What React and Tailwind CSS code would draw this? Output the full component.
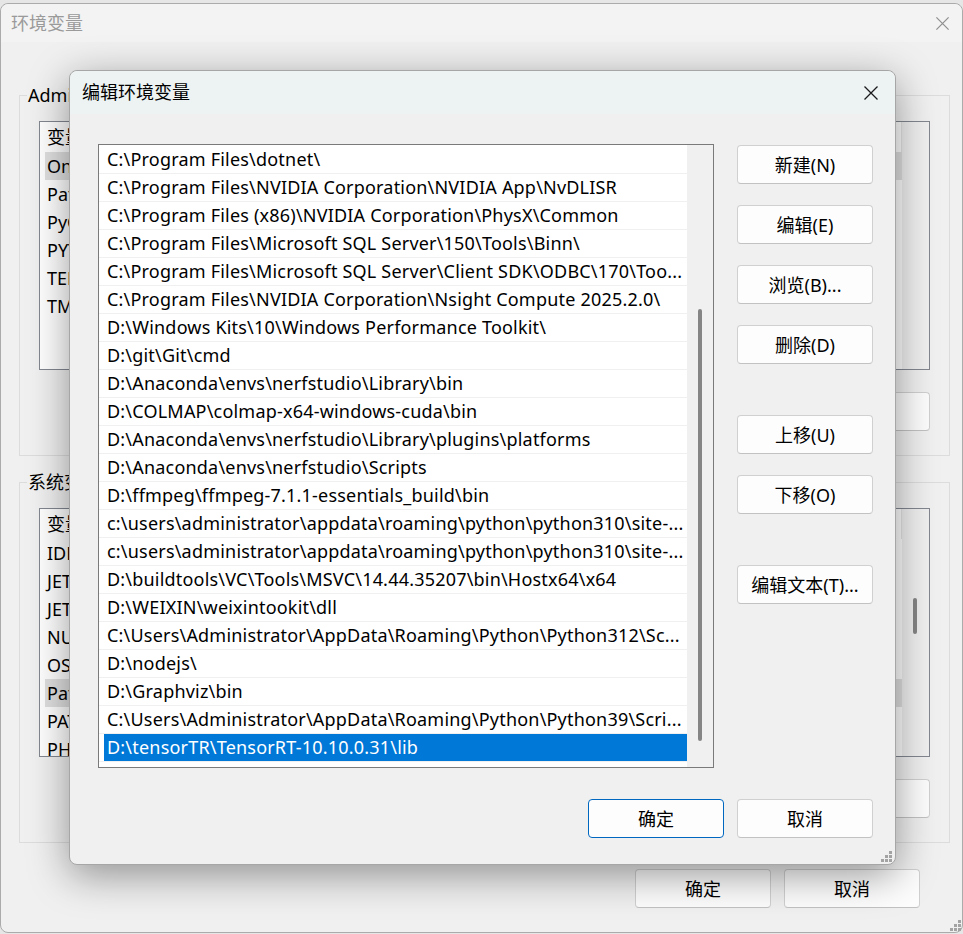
const paths = [
  'C:\\Program Files\\dotnet\\',
  'C:\\Program Files\\NVIDIA Corporation\\NVIDIA App\\NvDLISR',
  'C:\\Program Files (x86)\\NVIDIA Corporation\\PhysX\\Common',
  'C:\\Program Files\\Microsoft SQL Server\\150\\Tools\\Binn\\',
  'C:\\Program Files\\Microsoft SQL Server\\Client SDK\\ODBC\\170\\Too...',
  'C:\\Program Files\\NVIDIA Corporation\\Nsight Compute 2025.2.0\\',
  'D:\\Windows Kits\\10\\Windows Performance Toolkit\\',
  'D:\\git\\Git\\cmd',
  'D:\\Anaconda\\envs\\nerfstudio\\Library\\bin',
  'D:\\COLMAP\\colmap-x64-windows-cuda\\bin',
  'D:\\Anaconda\\envs\\nerfstudio\\Library\\plugins\\platforms',
  'D:\\Anaconda\\envs\\nerfstudio\\Scripts',
  'D:\\ffmpeg\\ffmpeg-7.1.1-essentials_build\\bin',
  'c:\\users\\administrator\\appdata\\roaming\\python\\python310\\site-...',
  'c:\\users\\administrator\\appdata\\roaming\\python\\python310\\site-...',
  'D:\\buildtools\\VC\\Tools\\MSVC\\14.44.35207\\bin\\Hostx64\\x64',
  'D:\\WEIXIN\\weixintookit\\dll',
  'C:\\Users\\Administrator\\AppData\\Roaming\\Python\\Python312\\Sc...',
  'D:\\nodejs\\',
  'D:\\Graphviz\\bin',
  'C:\\Users\\Administrator\\AppData\\Roaming\\Python\\Python39\\Scri...',
  'D:\\tensorTR\\TensorRT-10.10.0.31\\lib',
];

// only the first letters of these peek out from behind the dialog
const userVars = ['OneDrive', 'Path', 'PyCharm', 'PYTHONPATH', 'TEMP', 'TMP'];
const sysVars = ['IDEA', 'JETBRAINS', 'JETBRAINS', 'NUMBER', 'OS', 'Path', 'PATHEXT', 'PHP', 'PROCESSOR'];

function CloseIcon({ className }) {
  return (
    <svg width="16" height="16" viewBox="0 0 16 16" className={className}>
      <path d="M1.5 1.5 L14.5 14.5 M14.5 1.5 L1.5 14.5" stroke="currentColor" strokeWidth="1.3" fill="none" />
    </svg>
  );
}

function Grip() {
  return (
    <svg width="11" height="11" viewBox="0 0 11 11">
      <g fill="#a3a3a3">
        <rect x="8" y="0" width="3" height="3" />
        <rect x="4" y="4" width="3" height="3" />
        <rect x="8" y="4" width="3" height="3" />
        <rect x="0" y="8" width="3" height="3" />
        <rect x="4" y="8" width="3" height="3" />
        <rect x="8" y="8" width="3" height="3" />
      </g>
    </svg>
  );
}

function Btn({ children, primary, className = '' }) {
  return (
    <button
      className={`w-[136px] h-[39px] shrink-0 rounded-[4px] border bg-[#fdfdfd] text-[18px] leading-none text-black flex items-center justify-center ${
        primary ? 'border-[#0067c0]' : 'border-[#d0d0d0] border-b-[#c2c2c2]'
      } ${className}`}
    >
      {children}
    </button>
  );
}

function VarList({ rows, selected, scroll }) {
  return (
    <div className="h-[249px] border border-[#828790] bg-white overflow-hidden flex">
      <div className="ml-[5px] w-[857px] shrink-0">
        <div className="h-[30px] flex items-center">
          <div className="flex-1 pl-[2px]">变量</div>
          <div className="w-px h-full bg-[#e5e5e5]" />
        </div>
        {rows.map((name, i) => (
          <div
            key={i}
            className={`h-[28px] flex items-center whitespace-nowrap pl-[2px] ${i === selected ? 'bg-[#e0e0e0]' : ''}`}
          >
            {name}
          </div>
        ))}
      </div>
      <div className="flex-1 bg-[#f0f0f0] pt-[89px]">
        {scroll && <div className="ml-[11px] w-[4px] h-[36px] rounded-full bg-[#858585]" />}
      </div>
    </div>
  );
}

function Group({ label, children, className = '' }) {
  return (
    <fieldset className={`ml-[18px] w-[931px] border border-[#dcdcdc] p-0 ${className}`}>
      <legend className="ml-[7px] px-[1px] leading-[24px] text-[18px] text-black">{label}</legend>
      <div className="px-[19px] pt-[14px] pb-[24px]">{children}</div>
    </fieldset>
  );
}

export default function App() {
  return (
    <div className="relative w-[963px] h-[934px] overflow-hidden bg-[#e6e6e6] pt-[3px] text-[18px] text-black font-['Noto_Sans','Noto_Sans_CJK_SC',sans-serif]">
      {/* background window */}
      <div className="w-[963px] h-[930px] rounded-[8px] border border-[#ababab] bg-[#f0f0f0] flex flex-col">
        <div className="h-[38px] flex items-center justify-between pl-[10px] pr-[12px] bg-[#f3f3f3] rounded-t-[8px]">
          <span className="text-[#9a9a9a]">环境变量</span>
          <CloseIcon className="text-[#8f8f8f] w-[15px] h-[15px]" />
        </div>

        <Group label="Administrator 的用户变量(U)" className="mt-[41px]">
          <VarList rows={userVars} selected={0} />
          <div className="mt-[22px] flex justify-end gap-[13px]">
            <Btn>新建(N)...</Btn>
            <Btn>编辑(E)...</Btn>
            <Btn>删除(D)</Btn>
          </div>
        </Group>

        <Group label="系统变量(S)" className="mt-[14px]">
          <VarList rows={sysVars} selected={5} scroll />
          <div className="mt-[22px] flex justify-end gap-[13px]">
            <Btn>新建(W)...</Btn>
            <Btn>编辑(I)...</Btn>
            <Btn>删除(L)</Btn>
          </div>
        </Group>

        <div className="mt-[26px] flex justify-end gap-[13px] pr-[42px]">
          <Btn className="w-[135px]">确定</Btn>
          <Btn className="w-[135px]">取消</Btn>
        </div>
        <div className="flex-1 flex items-end justify-end pr-[1px] pb-[1px]">
          <Grip />
        </div>
      </div>

      {/* edit dialog */}
      <div className="absolute left-[69px] top-[70px] w-[827px] h-[795px] rounded-[8px] border border-[#a6a6a6] bg-[#f0f0f0] flex flex-col shadow-[0_10px_40px_rgba(0,0,0,0.4)]">
        <div className="h-[43px] shrink-0 flex items-center justify-between pl-[12px] pr-[16px] bg-[#edf3f3] rounded-t-[8px]">
          <span>编辑环境变量</span>
          <CloseIcon className="text-[#1a1a1a] w-[16px] h-[16px]" />
        </div>

        <div className="flex pt-[30px] pl-[28px]">
          <div className="w-[616px] h-[624px] border border-[#7a7a7a] bg-white flex overflow-hidden">
            <div className="w-[588px] shrink-0 pt-[1px] tracking-[0.2px]">
              {paths.map((p, i) => (
                <div key={i} className="h-[28px] border-b border-[#f0f0f0] flex">
                  <div
                    className={`ml-[5px] flex-1 pl-[3px] flex items-center whitespace-nowrap overflow-hidden ${
                      i === paths.length - 1 ? 'bg-[#0078d7] text-white' : ''
                    }`}
                  >
                    {p}
                  </div>
                </div>
              ))}
            </div>
            <div className="flex-1 bg-[#f0f0f0] pt-[164px] pl-[11px]">
              <div className="w-[4px] h-[432px] rounded-full bg-[#858585]" />
            </div>
          </div>

          <div className="ml-[23px] pt-[1px] flex flex-col">
            <Btn>新建(N)</Btn>
            <Btn className="mt-[21px]">编辑(E)</Btn>
            <Btn className="mt-[21px]">浏览(B)...</Btn>
            <Btn className="mt-[21px]">删除(D)</Btn>
            <Btn className="mt-[51px]">上移(U)</Btn>
            <Btn className="mt-[21px]">下移(O)</Btn>
            <Btn className="mt-[51px]">编辑文本(T)...</Btn>
          </div>
        </div>

        <div className="mt-[31px] flex justify-end gap-[13px] pr-[22px]">
          <Btn primary>确定</Btn>
          <Btn>取消</Btn>
        </div>
        <div className="flex-1 flex items-end justify-end pr-[3px] pb-[2px]">
          <Grip />
        </div>
      </div>
    </div>
  );
}
